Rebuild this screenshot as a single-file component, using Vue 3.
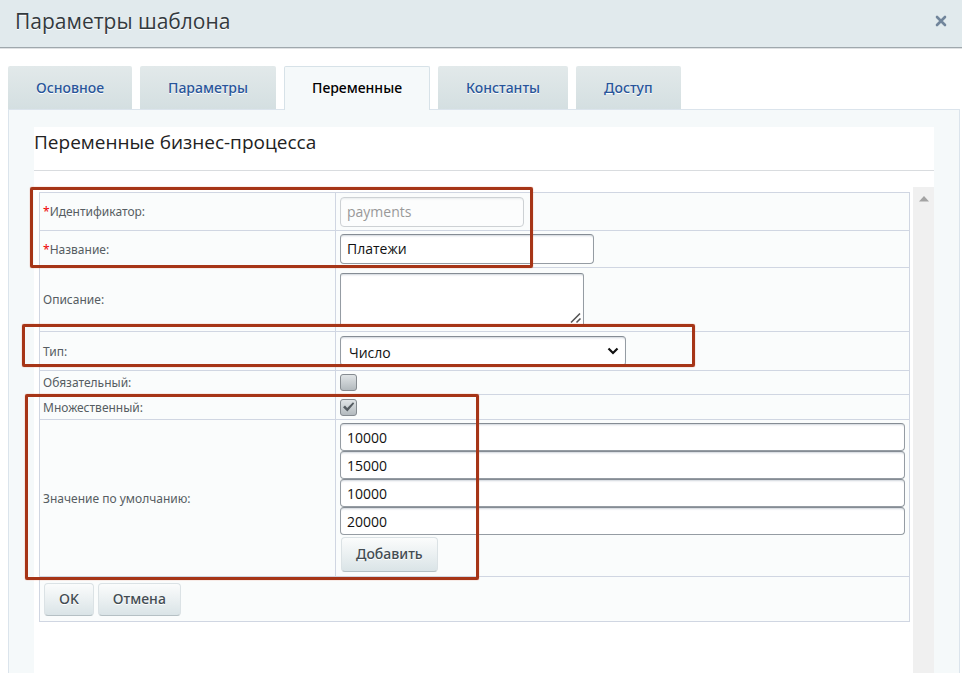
<script setup>
import { ref } from 'vue'

const tabs = ['Основное', 'Параметры', 'Переменные', 'Константы', 'Доступ']
const active = ref('Переменные')
const code = ref('payments')
const name = ref('Платежи')
const description = ref('')
const type = ref('Число')
const required = ref(false)
const multiple = ref(true)
const values = ref(['10000', '15000', '10000', '20000'])
</script>

<template>
  <div class="dialog">
    <header class="titlebar">
      <h1 class="title">Параметры шаблона</h1>
      <button class="close" type="button" aria-label="Закрыть">
        <svg width="12" height="12" viewBox="0 0 12 12"><path d="M2 2L10 10M10 2L2 10" stroke="#71859b" stroke-width="2.6" stroke-linecap="round" /></svg>
      </button>
    </header>

    <nav class="tabs">
      <button v-for="t in tabs" :key="t" type="button" class="tab" :class="{ active: t === active }" @click="active = t">{{ t }}</button>
    </nav>

    <main class="panel">
      <section class="sheet">
        <h2 class="heading">Переменные бизнес-процесса</h2>
        <div class="scroller">
          <form class="form" @submit.prevent>
            <table class="grid">
              <colgroup><col class="col-label" /><col /></colgroup>
              <tbody>
                <tr class="r-code">
                  <th scope="row"><label for="code"><span class="star">*</span>Идентификатор:</label></th>
                  <td><input id="code" v-model="code" class="field code" type="text" disabled /></td>
                </tr>
                <tr class="r-name">
                  <th scope="row"><label for="name"><span class="star">*</span>Название:</label></th>
                  <td><input id="name" v-model="name" class="field name" type="text" /></td>
                </tr>
                <tr class="r-desc">
                  <th scope="row"><label for="desc">Описание:</label></th>
                  <td>
                    <div class="area-wrap">
                      <textarea id="desc" v-model="description" class="field area"></textarea>
                      <svg class="grip" width="12" height="12" viewBox="0 0 12 12"><path d="M1 10.5L10 1.5M6.5 10.5L10.5 6.5" stroke="#555" stroke-width="1.6" /></svg>
                    </div>
                  </td>
                </tr>
                <tr class="r-type">
                  <th scope="row"><label for="type">Тип:</label></th>
                  <td>
                    <div class="select-wrap">
                      <select id="type" v-model="type" class="field select"><option>Число</option></select>
                      <svg class="chevron" width="12" height="8" viewBox="0 0 12 8"><path d="M1.5 1.5L6 6L10.5 1.5" fill="none" stroke="#111" stroke-width="2.2" /></svg>
                    </div>
                  </td>
                </tr>
                <tr class="r-req">
                  <th scope="row"><label for="req">Обязательный:</label></th>
                  <td><span class="check-wrap"><input id="req" v-model="required" class="check" type="checkbox" /></span></td>
                </tr>
                <tr class="r-mult">
                  <th scope="row"><label for="mult">Множественный:</label></th>
                  <td>
                    <span class="check-wrap">
                      <input id="mult" v-model="multiple" class="check" type="checkbox" />
                      <svg v-if="multiple" class="tick" width="17" height="16" viewBox="0 0 17 16"><path d="M3 8.2L5 6.6L7.2 9L13 3.2L14.2 4.4L7.4 12.6Z" fill="#555c61" /></svg>
                    </span>
                  </td>
                </tr>
                <tr class="r-values">
                  <th scope="row"><label for="value-0">Значение по умолчанию:</label></th>
                  <td>
                    <div class="values">
                      <input v-for="(v, i) in values" :id="'value-' + i" :key="i" v-model="values[i]" class="field value" type="text" aria-label="Значение по умолчанию" />
                      <button type="button" class="btn add" @click="values.push('')">Добавить</button>
                    </div>
                  </td>
                </tr>
                <tr class="r-actions">
                  <td colspan="2">
                    <div class="actions">
                      <button type="submit" class="btn">OK</button>
                      <button type="button" class="btn">Отмена</button>
                    </div>
                  </td>
                </tr>
              </tbody>
            </table>
            <div class="mark mark-names"></div>
            <div class="mark mark-type"></div>
            <div class="mark mark-values"></div>
          </form>
          <div class="scrollbar">
            <svg width="10" height="6" viewBox="0 0 10 6"><path d="M0 5.5L5 0L10 5.5Z" fill="#a3a3a3" /></svg>
          </div>
        </div>
      </section>
    </main>
  </div>
</template>

<style>
body { margin: 0; background: #fff; }
</style>

<style scoped>
* { box-sizing: border-box; }
.dialog {
  display: flex;
  flex-direction: column;
  min-height: 100vh;
  font-family: "Open Sans", "Noto Sans", sans-serif;
  font-size: 14px;
  color: #222;
}
button, input, select, textarea { font: inherit; }
.titlebar {
  display: flex;
  justify-content: space-between;
  align-items: center;
  height: 48px;
  padding: 0 14px 6px 15px;
  background: #e1eaed;
  border-bottom: 1px solid #9fa8ad;
  box-shadow: 0 1px 0 #dfe2e4;
}
.title { margin: 0; font-size: 21px; line-height: 30px; font-weight: 400; color: #333a3e; text-shadow: 0 1px 0 #fff; }
.close { display: flex; padding: 1px; border: 0; background: none; }
.tabs { position: relative; z-index: 1; display: flex; gap: 8px; padding: 18px 8px 0; }
.tab {
  height: 43px;
  padding: 0 28px;
  border: 0;
  border-radius: 2px 2px 0 0;
  background: linear-gradient(#e2e9ea, #d4dfe1);
  color: #28559a;
  font-family: "Noto Sans", sans-serif;
  font-weight: 500;
  text-shadow: 0 1px 0 #fff;
  cursor: pointer;
}
.tab.active {
  height: 44px;
  margin-bottom: -1px;
  padding: 0 27px 2px;
  border: 1px solid #d7e2e8;
  border-bottom: 0;
  background: #f5f9fa;
  color: #000;
}
.panel {
  display: flex;
  flex: 1;
  margin: 0 2px 0 8px;
  padding: 17px 25px 0;
  border: 1px solid #dbe4ec;
  border-bottom: 0;
  background: #f5f9fa;
}
.sheet { display: flex; flex: 1; flex-direction: column; background: #fff; }
.heading {
  height: 44px;
  margin: 0 0 16px;
  border-bottom: 1px solid #d9dcdf;
  font-size: 19px;
  line-height: 30px;
  font-weight: 400;
  color: #222;
}
.scroller { display: flex; flex: 1; gap: 3px; }
.form { position: relative; flex: 1; padding: 5px 0 0 5px; }
.scrollbar { width: 21px; padding-top: 7px; background: #f0f0f0; text-align: center; line-height: 6px; }
.grid { width: 100%; border-collapse: collapse; table-layout: fixed; background: #fafcfc; }
.col-label { width: 296px; }
.grid th, .grid td { padding: 0 4px; border: 1px solid #d0d6e2; }
.grid th {
  padding: 1px 3px 0;
  font-family: "Noto Sans", sans-serif;
  font-size: 12px;
  line-height: 16px;
  font-weight: 400;
  text-align: left;
  color: #565d62;
}
.r-code { height: 38px; }
.r-name { height: 37px; }
.r-desc { height: 64px; }
.r-type { height: 39px; }
.r-req { height: 24px; }
.r-mult { height: 25px; }
.r-values { height: 157px; }
.r-actions { height: 45px; }
.star { color: #e00; }
.field {
  display: block;
  height: 30px;
  margin: 0;
  padding: 0 6px 1px;
  border: 1px solid #959ca3;
  border-top-color: #858c94;
  border-radius: 4px;
  background: #fff;
  box-shadow: inset 0 2px 2px -1px #d0d6dc;
  color: #111;
}
.code { width: 184px; border-color: #cdd1d4; background: #fcfdfd; box-shadow: inset 0 2px 2px -1px #e8ebed; color: #999; }
.name { width: 254px; }
.area-wrap { position: relative; width: 244px; }
.area { width: 100%; height: 54px; border-radius: 3px; resize: none; }
.grip { position: absolute; right: 2px; bottom: 3px; }
.select-wrap { position: relative; width: 286px; }
.select { width: 100%; padding: 2px 8px 0; appearance: none; }
.chevron { position: absolute; right: 7px; top: 11px; pointer-events: none; }
.check-wrap { position: relative; display: block; width: 17px; height: 17px; }
.check {
  display: block;
  width: 17px;
  height: 17px;
  margin: 0;
  border: 1px solid #858b90;
  border-radius: 3px;
  background: linear-gradient(#e0e4e6, #b3babe);
  appearance: none;
}
.tick { position: absolute; inset: 0; pointer-events: none; }
.values { display: flex; flex-direction: column; align-items: flex-start; padding-bottom: 1px; }
.value { width: 100%; height: 28px; padding: 1px 6px 0; }
.btn {
  height: 33px;
  padding: 0 14px 2px;
  border: 1px solid #dbe2e5;
  border-bottom-color: #b5c0c4;
  border-radius: 4px;
  background: linear-gradient(#fbfcfc, #dae4e7);
  color: #434c52;
  font-family: "Noto Sans", sans-serif;
  font-weight: 500;
  text-shadow: 0 1px 0 #fff;
}
.add { height: 35px; margin: 2px 0 0 1px; }
.actions { display: flex; gap: 4px; }
.mark { position: absolute; border: 3px solid #a63517; border-radius: 2px; box-shadow: 0 0 1px #d9532c; pointer-events: none; }
.mark-names { left: -4px; top: 0; width: 503px; height: 81px; }
.mark-type { left: -12px; top: 137px; width: 673px; height: 43px; }
.mark-values { left: -9px; top: 207px; width: 454px; height: 186px; }
</style>
